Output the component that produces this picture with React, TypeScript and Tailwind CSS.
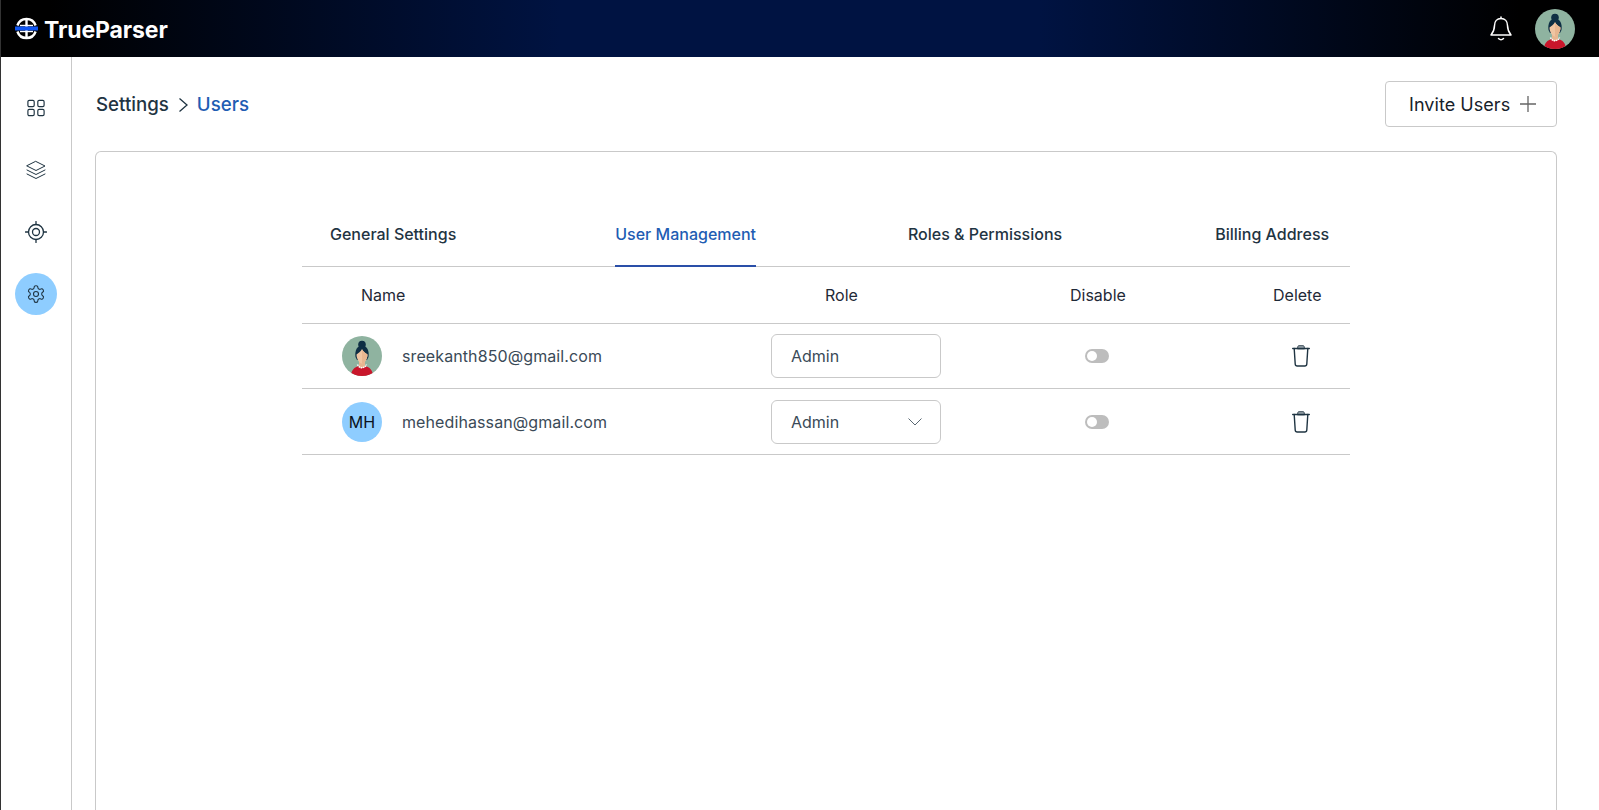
const fontClass = "font-['Inter',sans-serif]";

function Avatar({ size, id }: { size: number; id: string }) {
  return (
    <svg width={size} height={size} viewBox="0 0 40 40" className="shrink-0">
      <defs>
        <clipPath id={id}><circle cx="20" cy="20" r="20" /></clipPath>
      </defs>
      <g clipPath={`url(#${id})`}>
        <rect width="40" height="40" fill="#8fb3a0" />
        <path d="M9 41c0-6.500 3-10 8-11 1.500 1.800 4.500 1.800 6 0 5 1 8 4.500 8 11z" fill="#c9162b" />
        <path d="M17 24h6v6.500c-1 2-5 2-6 0z" fill="#e8b690" />
        <circle cx="20" cy="8.500" r="3.800" fill="#0f2f44" />
        <path d="M13.500 21c-1-6.500 1.800-11.500 6.500-11.500S27.500 14.500 26.500 21l-1.500 3H15z" fill="#0f2f44" />
        <path d="M14.500 18.500c1.500-1 4.500-3 5.500-5.500 1 2.500 4 4.500 5.500 5.500 0 4.500-3 9-5.500 9s-5.500-4.500-5.500-9z" fill="#f0c5a2" />
        <path d="M20 13.500v14c2.500 0 5.500-4.500 5.500-9-1.500-1-4.500-3-5.500-5z" fill="#e8b690" />
        <path d="M15.500 28.500c1.500 4.200 7.500 4.200 9 0" fill="none" stroke="#fff" strokeWidth="1.500" strokeDasharray="1.500 .7" />
      </g>
    </svg>
  );
}

function Logo() {
  return (
    <svg width="23" height="23" viewBox="0 0 23 23" className="shrink-0">
      <path d="M2.400 8.500A9.600 9.600 0 0 1 20.600 8.500" fill="none" stroke="#fff" strokeWidth="2.400" />
      <path d="M2.400 14.500A9.600 9.600 0 0 0 20.600 14.500" fill="none" stroke="#fff" strokeWidth="2.400" />
      <rect x="10.300" y="2" width="2.400" height="19" fill="#fff" />
      <rect x="5" y="7.800" width="13" height="1.500" fill="#fff" />
      <rect x="5" y="13.700" width="13" height="1.500" fill="#fff" />
      <rect x="0" y="9.500" width="23" height="4" fill="#0f55f0" />
    </svg>
  );
}

function Trash() {
  return (
    <svg width="18" height="22" viewBox="0 0 18 22" fill="none" stroke="#1f3442" strokeWidth="1.400" strokeLinecap="round" strokeLinejoin="round">
      <path d="M5.500 3.500 6 1.200c.1-.4.400-.5.700-.5h4.600c.3 0 .6.100.7.500l.5 2.300z" fill="#9aa5ad" stroke="#3b4c58" strokeWidth="1" />
      <path d="M.7 3.500h16.600" />
      <path d="M2.200 3.500 3.200 19c.1 1.300 1 2 2 2h7.600c1 0 1.900-.7 2-2l1-15.500" />
    </svg>
  );
}

function Toggle() {
  return (
    <span className="flex h-[14px] w-6 items-center rounded-full bg-[#bdbdbd] pl-[2px]">
      <span className="h-[10px] w-[10px] rounded-full bg-white" />
    </span>
  );
}

function SideIcon({ children, active }: { children: React.ReactNode; active?: boolean }) {
  return (
    <div className={`flex h-[42px] w-[42px] items-center justify-center rounded-full ${active ? "bg-[#8ecdff]" : ""}`}>
      {children}
    </div>
  );
}

const rows = [
  { email: "sreekanth850@gmail.com", avatar: true, chevron: false, height: "h-[65px]" },
  { email: "mehedihassan@gmail.com", avatar: false, chevron: true, height: "h-[66px]" },
];

export default function App() {
  return (
    <div className={`${fontClass} flex h-[810px] flex-col overflow-hidden border-l border-l-[#333] bg-white`}>
      <header className="flex h-[57px] shrink-0 items-center justify-between bg-[linear-gradient(90deg,#000000_3%,#001342_35%,#001342_65%,#000000_95%)] pl-[14px] pr-[24px]">
        <div className="flex items-center gap-[6px]">
          <Logo />
          <span className="pt-[3px] text-[23px] font-bold leading-none tracking-[-0.1px] text-white">TrueParser</span>
        </div>
        <div className="flex items-center gap-[22px]">
          <svg width="24" height="26" viewBox="0 0 24 26" fill="none" stroke="#fff" strokeWidth="1.500" strokeLinecap="round" strokeLinejoin="round">
            <path d="M12 2.500c-4 0-6.500 3-6.500 7 0 5-1.500 7-3.500 9.500h20c-2-2.500-3.500-4.500-3.500-9.500 0-4-2.500-7-6.500-7z" />
            <path d="M12 1v1.500M9.500 22.500c1.500 1.500 3.500 1.500 5 0" />
          </svg>
          <Avatar size={40} id="av-top" />
        </div>
      </header>
      <div className="flex min-h-0 flex-1">
        <aside className="flex w-[71px] shrink-0 flex-col items-center gap-[20px] border-r border-r-[#c9c9c9] pt-[30px]">
          <SideIcon>
            <svg width="18" height="18" viewBox="0 0 20 20" fill="none" stroke="#1f3442" strokeWidth="1.300">
              <rect x="1" y="1.500" width="7" height="7" rx="1.500" />
              <rect x="12" y="1.500" width="7" height="7" rx="1.500" />
              <rect x="1" y="11.500" width="7" height="7" rx="1.500" />
              <rect x="12" y="11.500" width="7" height="7" rx="1.500" />
            </svg>
          </SideIcon>
          <SideIcon>
            <svg width="20" height="20" viewBox="0 0 20 20" fill="none" stroke="#1f3442" strokeWidth="1" strokeLinejoin="round" strokeLinecap="round">
              <path d="M10 1.500 19 6l-9 4.500L1 6z" />
              <path d="M1 10l9 4.500L19 10" />
              <path d="M1 14l9 4.500L19 14" />
            </svg>
          </SideIcon>
          <SideIcon>
            <svg width="22" height="22" viewBox="0 0 22 22" fill="none" stroke="#1f3442" strokeWidth="1.300" strokeLinecap="round">
              <circle cx="11" cy="11" r="7.500" />
              <circle cx="11" cy="11" r="3.500" />
              <path d="M11 .5v3M11 18.500v3M.5 11h3M18.500 11h3" />
            </svg>
          </SideIcon>
          <SideIcon active>
            <svg width="20" height="20" viewBox="0 0 24 24" fill="none" stroke="#1f3442" strokeWidth="1.300" strokeLinejoin="round">
              <path d="M12.220 2h-.44a2 2 0 0 0-2 2v.18a2 2 0 0 1-1 1.730l-.43.250a2 2 0 0 1-2 0l-.15-.08a2 2 0 0 0-2.730.730l-.22.380a2 2 0 0 0 .730 2.730l.15.100a2 2 0 0 1 1 1.720v.510a2 2 0 0 1-1 1.740l-.15.090a2 2 0 0 0-.730 2.730l.22.380a2 2 0 0 0 2.730.730l.15-.08a2 2 0 0 1 2 0l.43.250a2 2 0 0 1 1 1.730V20a2 2 0 0 0 2 2h.44a2 2 0 0 0 2-2v-.18a2 2 0 0 1 1-1.730l.43-.250a2 2 0 0 1 2 0l.15.080a2 2 0 0 0 2.730-.730l.22-.390a2 2 0 0 0-.730-2.730l-.15-.080a2 2 0 0 1-1-1.740v-.500a2 2 0 0 1 1-1.740l.15-.090a2 2 0 0 0 .730-2.730l-.22-.380a2 2 0 0 0-2.730-.730l-.15.080a2 2 0 0 1-2 0l-.43-.250a2 2 0 0 1-1-1.730V4a2 2 0 0 0-2-2z" />
              <circle cx="12" cy="12" r="3" />
            </svg>
          </SideIcon>
        </aside>
        <main className="flex min-w-0 flex-1 flex-col pl-[23px] pr-[42px] pt-[24px]">
          <div className="flex h-[46px] shrink-0 items-center justify-between pl-px">
            <div className="flex items-center gap-[7px] pt-[2px] text-[18.700px] font-medium">
              <span className="text-[#1f3442]">Settings</span>
              <svg width="14" height="16" viewBox="0 0 14 16" fill="none" stroke="#1f3442" strokeWidth="1.300"><path d="M3.500 1.500 11 8 3.500 14.500" /></svg>
              <span className="text-[#1f5db3]">Users</span>
            </div>
            <button className="flex h-[46px] w-[172px] items-center justify-start gap-[10px] rounded-[4px] border border-[#c9c9c9] pl-[23px] text-[18px] tracking-[0.05px] text-[#17212b]">
              Invite Users
              <svg width="16" height="16" viewBox="0 0 16 16" stroke="#666" strokeWidth="1.300"><path d="M8 0v16M0 8h16" /></svg>
            </button>
          </div>
          <section className="mt-[24px] flex-1 rounded-t-[6px] border border-b-0 border-[#c9c9c9] pl-[206px] pr-[206px] pt-[60px]">
            <nav className="flex h-[55px] items-start border-b border-[#c9c9c9] pl-[28px] text-[16px] font-medium text-[#1f3442]">
              <span className="leading-[44px]">General Settings</span>
              <span className="ml-[159px] h-[55px] border-b-2 border-[#2a4fa8] leading-[44px] text-[#1f5db3]">User Management</span>
              <span className="ml-[152px] leading-[44px]">Roles &amp; Permissions</span>
              <span className="ml-[153px] leading-[44px]">Billing Address</span>
            </nav>
            <div className="grid h-[57px] grid-cols-[469px_288px_184px_1fr] items-center border-b border-[#c9c9c9] text-[16px] text-[#1f2937]">
              <span className="pl-[59px]">Name</span>
              <span className="pl-[54px]">Role</span>
              <span className="pl-[11px]">Disable</span>
              <span className="pl-[30px]">Delete</span>
            </div>
            {rows.map((r) => (
              <div key={r.email} className={`grid ${r.height} grid-cols-[469px_288px_184px_1fr] items-center border-b border-[#c9c9c9] text-[16px] text-[#3a4a57]`}>
                <div className="flex items-center gap-[20px] pl-[40px]">
                  {r.avatar ? (
                    <Avatar size={40} id="av-row" />
                  ) : (
                    <div className="flex h-10 w-10 items-center justify-center rounded-full bg-[#8ecdff] text-[16px] text-[#0a1220]">MH</div>
                  )}
                  <span className="tracking-[0.1px]">{r.email}</span>
                </div>
                <div className="flex">
                  <div className="flex h-[44px] w-[170px] items-center justify-between rounded-[6px] border border-[#c9c9c9] pl-[19px] pr-[18px]">
                    <span>Admin</span>
                    {r.chevron && (
                      <svg width="14" height="8" viewBox="0 0 14 8" fill="none" stroke="#5a6873" strokeWidth="1"><path d="M.5.5 7 7l6.500-6.500" /></svg>
                    )}
                  </div>
                </div>
                <div className="pl-[26px]"><Toggle /></div>
                <div className="pl-[49px]"><Trash /></div>
              </div>
            ))}
          </section>
        </main>
      </div>
    </div>
  );
}
